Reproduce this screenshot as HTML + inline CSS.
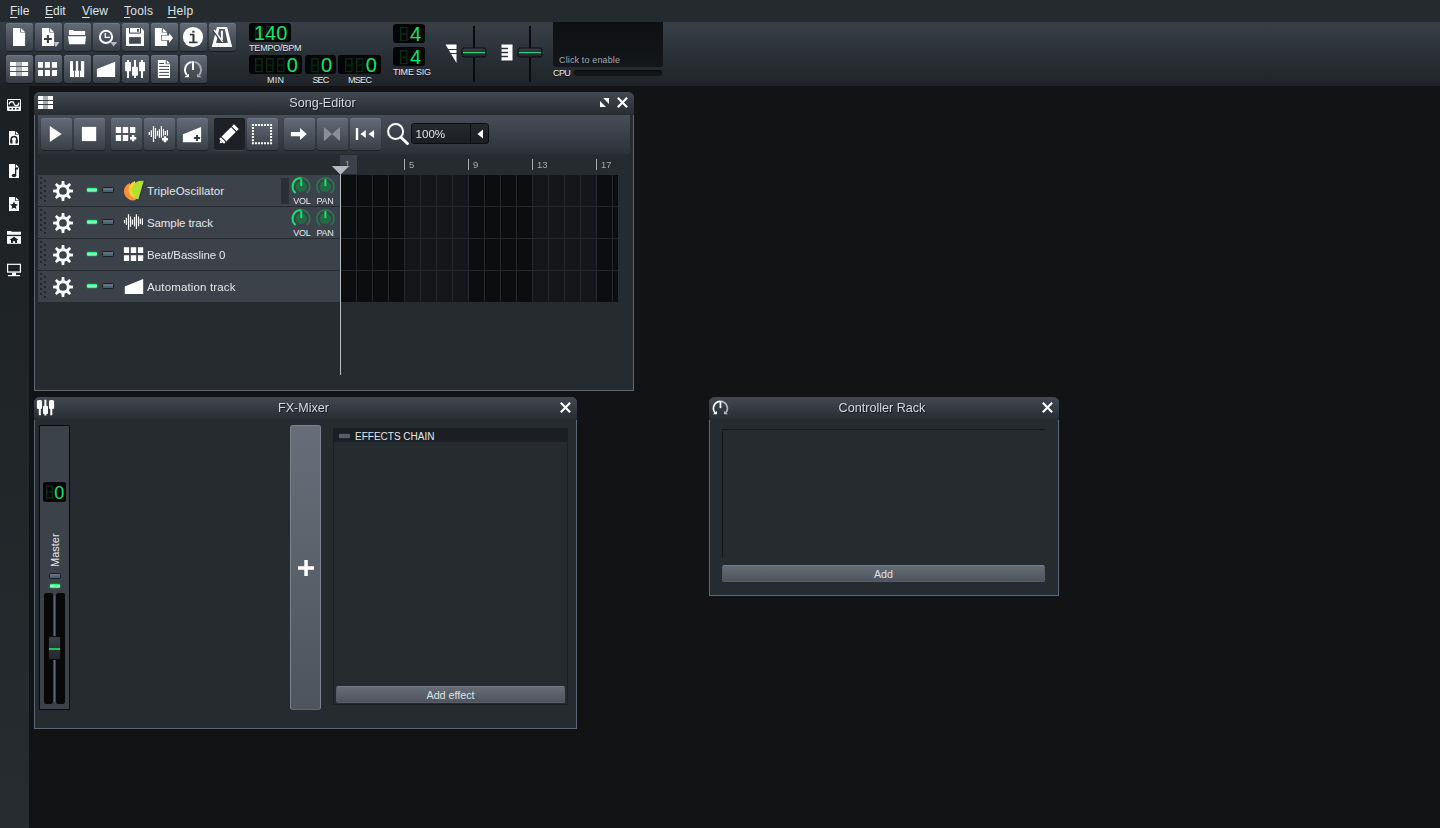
<!DOCTYPE html>
<html lang="en">
<head>
<meta charset="utf-8">
<title>LMMS</title>
<style>
*{box-sizing:border-box;margin:0;padding:0}
html,body{width:1440px;height:828px;overflow:hidden}
body{background:#111314;font-family:"Liberation Sans",sans-serif;font-size:12px;color:#e0e4e8;position:relative}
.abs{position:absolute}
#menubar{position:absolute;left:0;top:0;width:1440px;height:22px;background:#252a2e}
#menubar span{position:absolute;top:4px;font-size:12px;line-height:14px;color:#dfe3e8;white-space:nowrap}
#menubar span u{text-decoration:underline;text-decoration-thickness:1px;text-underline-offset:1.500px}
#toolbar{position:absolute;left:0;top:22px;width:1440px;height:64px;background:linear-gradient(#383f48,#1f2327)}
#sidebar{position:absolute;left:0;top:86px;width:29px;height:742px;background:linear-gradient(#1c2022,#272c30)}
.tb{position:absolute;width:27px;height:28px;border-radius:3px;background:linear-gradient(#626b78,#393e46);box-shadow:inset 0 1px 0 #6d7684,0 1px 1px rgba(0,0,0,.45)}
.tb svg{position:absolute;left:0;top:0}
.lcd{position:absolute;background:#040506;border-radius:3px}
.lbl{position:absolute;font-size:9px;line-height:10px;color:#e8ebee;white-space:nowrap;text-shadow:0 1px 0 #101214}
.win{position:absolute;background:#262b30;border:1px solid #5c6877;border-top:none;border-radius:6px 6px 0 0}
.title{position:absolute;left:-1px;right:-1px;top:0;height:23px;background:linear-gradient(#424952,#272c31);border-radius:6px 6px 0 0}
.title .tt{position:absolute;left:0;right:0;top:3px;text-align:center;font-size:12.600px;line-height:16px;color:#d6d9de;text-shadow:1px 1px 0 #15181b;white-space:nowrap;will-change:transform}
.sb{position:absolute;width:31px;height:32px;border-radius:3px;background:linear-gradient(#626b78,#3a3f47);box-shadow:inset 0 1px 0 #6d7684,0 1px 1px rgba(0,0,0,.4)}
.sb svg{position:absolute;left:0;top:0}
.sb.on{background:#1d2024;box-shadow:inset 0 1px 0 #191c1f,0 1px 0 #3d444c}
.row{position:absolute;left:3px;width:303px;height:31px;background:#3b424a}
.row .name{position:absolute;left:109px;top:9px;font-size:11.500px;line-height:14px;color:#e4e7ea;white-space:nowrap}
.ledg{position:absolute;width:10.500px;height:4.400px;border-radius:1px;background:linear-gradient(#3bf288 0,#3bf288 28%,#a0fcc8 42%,#a0fcc8 58%,#3bf288 72%);box-shadow:0 0 1.500px #2fe67f}
.ledo{position:absolute;width:11.800px;height:5.800px;border-radius:1.500px;background:linear-gradient(#68798c,#4a5866);border:1px solid #1c2024}
.btn{position:absolute;border-radius:2px;background:linear-gradient(#646c77,#4e555e);border:1px solid #565d67;border-top-color:#737b87;color:#dfe3e8;text-align:center;font-size:10.700px}
</style>
</head>
<body>
<div id="menubar">
<span style="left:10px"><u>F</u>ile</span>
<span style="left:45px"><u>E</u>dit</span>
<span style="left:82px"><u>V</u>iew</span>
<span style="left:124px;letter-spacing:.25px"><u>T</u>ools</span>
<span style="left:167.500px;letter-spacing:.3px"><u>H</u>elp</span>
</div>
<div id="toolbar"></div>
<div id="sidebar"></div>
<!--MAINTB_START-->
<!-- main toolbar row 1 -->
<div class="tb" style="left:6px;top:23px"><svg width="27" height="28"><path d="M7 5h7.200v4.400h4.900V23H7z" fill="#fff"/><path d="M15 5.200l3.900 3.900H15z" fill="#fff"/></svg></div>
<div class="tb" style="left:35px;top:23px"><svg width="27" height="28"><path d="M7 5h7.200v4.400h4.900V23H7z" fill="#fff"/><path d="M15 5.200l3.900 3.900H15z" fill="#fff"/><path d="M9 15h7.800v2H9zM11.900 12.100h2v7.800h-2z" fill="#353a42"/><path d="M19.100 19h5.400l-3.200 4.500h-1.200z" fill="#c3c7cd"/></svg></div>
<div class="tb" style="left:64px;top:23px"><svg width="27" height="28"><path d="M4.900 6.900h4.200l.5 1h11.500v4H4.900z" fill="#fff"/><path d="M4 13.200h18l-.9 8H5.100z" fill="#fff"/></svg></div>
<div class="tb" style="left:93px;top:23px"><svg width="27" height="28"><circle cx="13" cy="13.900" r="6.100" fill="none" stroke="#fff" stroke-width="2"/><path d="M12.300 9.900v4.400H17" fill="none" stroke="#fff" stroke-width="1.300"/><path d="M17.200 19h7.100l-3.700 4.400z" fill="#b5bac1"/></svg></div>
<div class="tb" style="left:122px;top:23px"><svg width="27" height="28"><path d="M4 5h15.300L22 7.700V23H4z" fill="#fff"/><path d="M7.500 5v5.100h11V5" fill="none" stroke="#3c424b" stroke-width="1"/><path d="M15.100 6.100h1.800v2.700h-1.800z" fill="#3c424b"/><path d="M7.100 14.100h11.800v6.700H7.100z" fill="#434a54"/></svg></div>
<div class="tb" style="left:151px;top:23px"><svg width="27" height="28"><path d="M3.900 5h6.900v4.400h5.300V23H3.900z" fill="#fff"/><path d="M11.900 5.200l3.900 3.900h-3.900z" fill="#fff"/><path d="M10.800 12.600h7.300v-2.500l4 4.900-4 4.900v-2.700h-7.300z" fill="#fff" stroke="#3f454e" stroke-width="1.200" paint-order="stroke"/></svg></div>
<div class="tb" style="left:180px;top:23px"><svg width="27" height="28" style="will-change:transform"><circle cx="13" cy="14" r="10.100" fill="#fff"/><text x="13" y="19.900" text-anchor="middle" font-family="Liberation Mono,monospace" font-size="17" fill="#33383f" stroke="#33383f" stroke-width=".35">i</text></svg></div>
<div class="tb" style="left:209px;top:23px"><svg width="27" height="28"><path d="M7.900 3.900h10.200l5.100 20.200H2.800z M10.100 6.100L7.200 19.900h11.600L15.900 6.100z" fill="#fff" fill-rule="evenodd"/><path d="M11.900 7.700h2V17h-2z" fill="#fff"/><path d="M4.600 7.400l8.500 11.800" stroke="#3f454e" stroke-width="2.600"/><path d="M5.200 7l8.500 11.800" stroke="#fff" stroke-width="1.400"/></svg></div>
<!-- main toolbar row 2 -->
<div class="tb" style="left:6px;top:55px"><svg width="27" height="28"><path d="M4 7h6.200v3.900H4zM15.900 7h6.200v3.900h-6.200zM4 12.100h6.200v3.800H4zM15.900 12.100h6.200v3.800h-6.200zM4 17.100h6.200V21H4zM15.900 17.100h6.200V21h-6.200z" fill="#fff"/><path d="M10.200 7h5.700v3.900h-5.700zM10.200 12.100h5.700v3.800h-5.700zM10.200 17.100h5.700V21h-5.700z" fill="#b3b7bc"/></svg></div>
<div class="tb" style="left:35px;top:55px"><svg width="27" height="28"><path d="M3 7h5v5.800H3zM9.900 7h5.100v5.800H9.900zM16.900 7h5.100v5.800h-5.100zM3 15h5v6H3zM9.900 15h5.100v6H9.900zM16.900 15h5.100v6h-5.100z" fill="#fff"/></svg></div>
<div class="tb" style="left:64px;top:55px"><svg width="27" height="28"><path d="M6 6.100h14.200v16H6z" fill="#fff"/><path d="M9.100 6.100h2.700v9.600H9.100zM14.200 6.100h2.700v9.600h-2.700z" fill="#454c56"/><path d="M10.100 15.700h.8v6.400h-.8zM15.200 15.700h.8v6.400h-.8z" fill="#40464f"/></svg></div>
<div class="tb" style="left:93px;top:55px"><svg width="27" height="28"><path d="M3.900 13.900L22.100 6.800v15.300H3.900z" fill="#fff"/></svg></div>
<div class="tb" style="left:122px;top:55px"><svg width="27" height="28"><path d="M5 5h2v18H5zM12 5h2v18h-2zM19 5h2v18h-2z" fill="#fff"/><rect x="3.100" y="7" width="5.900" height="9.300" rx=".8" fill="#fff"/><rect x="10" y="11.700" width="5.900" height="9" rx=".8" fill="#fff"/><rect x="17.100" y="7" width="5.900" height="9.300" rx=".8" fill="#fff"/></svg></div>
<div class="tb" style="left:151px;top:55px"><svg width="27" height="28"><path d="M6.900 5h7.800v4.300H19V23H6.900z" fill="#fff"/><path d="M15.700 5.200l3.300 3.300h-3.300z" fill="#fff"/><path d="M8.200 8.500H13M8.200 11.400H18M8.200 14.400H18M8.200 17.400H18M8.200 20.400H18" stroke="#434a54" stroke-width="1"/></svg></div>
<div class="tb" style="left:180px;top:55px"><svg width="27" height="28"><path d="M11.600 7.100A8 8 0 0 0 6.800 20" fill="none" stroke="#fff" stroke-width="2"/><path d="M14.400 7.100A8 8 0 0 1 19.200 20" fill="none" stroke="#a6abb3" stroke-width="2"/><path d="M12 6.300h2V15h-2z" fill="#fff"/><path d="M4.200 22.300H9v-3.600z" fill="#fff"/><path d="M17 18.700v3.600h4.800z" fill="#a6abb3"/></svg></div>
<!--MAINTB_END-->
<!--LCDS_START-->
<!-- LCDs -->
<div class="lcd" style="left:249px;top:23px;width:42px;height:19px"><svg width="42" height="19" style="position:absolute;left:0;top:0"><path d="M6 3.0h7.6v14.2h-7.6z M7.4 4.4v5.0h4.8v-5.0z M7.4 10.799999999999999v5.0h4.8v-5.0z" fill="#0a2917" fill-rule="evenodd"/><path d="M17 3.0h7.6v14.2h-7.6z M18.4 4.4v5.0h4.8v-5.0z M18.4 10.799999999999999v5.0h4.8v-5.0z" fill="#0a2917" fill-rule="evenodd"/><text x="38.3" y="17.2" text-anchor="end" font-family="Liberation Sans,sans-serif" font-size="20" fill="#12e56a">140</text></svg></div>
<div class="lcd" style="left:249px;top:55px;width:53px;height:19px"><svg width="53" height="19" style="position:absolute;left:0;top:0"><path d="M6 3.0h7.6v14.2h-7.6z M7.4 4.4v5.0h4.8v-5.0z M7.4 10.799999999999999v5.0h4.8v-5.0z" fill="#0a2917" fill-rule="evenodd"/><path d="M17 3.0h7.6v14.2h-7.6z M18.4 4.4v5.0h4.8v-5.0z M18.4 10.799999999999999v5.0h4.8v-5.0z" fill="#0a2917" fill-rule="evenodd"/><path d="M28 3.0h7.6v14.2h-7.6z M29.4 4.4v5.0h4.8v-5.0z M29.4 10.799999999999999v5.0h4.8v-5.0z" fill="#0a2917" fill-rule="evenodd"/><text x="48.8" y="17.2" text-anchor="end" font-family="Liberation Sans,sans-serif" font-size="20" fill="#12e56a">0</text></svg></div>
<div class="lcd" style="left:305px;top:55px;width:31px;height:19px"><svg width="31" height="19" style="position:absolute;left:0;top:0"><path d="M6.3 3.0h7.6v14.2h-7.6z M7.699999999999999 4.4v5.0h4.8v-5.0z M7.699999999999999 10.799999999999999v5.0h4.8v-5.0z" fill="#0a2917" fill-rule="evenodd"/><text x="27" y="17.2" text-anchor="end" font-family="Liberation Sans,sans-serif" font-size="20" fill="#12e56a">0</text></svg></div>
<div class="lcd" style="left:338px;top:55px;width:43px;height:19px"><svg width="43" height="19" style="position:absolute;left:0;top:0"><path d="M7 3.0h7.6v14.2h-7.6z M8.4 4.4v5.0h4.8v-5.0z M8.4 10.799999999999999v5.0h4.8v-5.0z" fill="#0a2917" fill-rule="evenodd"/><path d="M18 3.0h7.6v14.2h-7.6z M19.4 4.4v5.0h4.8v-5.0z M19.4 10.799999999999999v5.0h4.8v-5.0z" fill="#0a2917" fill-rule="evenodd"/><text x="38.8" y="17.2" text-anchor="end" font-family="Liberation Sans,sans-serif" font-size="20" fill="#12e56a">0</text></svg></div>
<div class="lcd" style="left:393px;top:24px;width:32px;height:19px"><svg width="32" height="19" style="position:absolute;left:0;top:0"><path d="M7 2.9h7.6v14.2h-7.6z M8.4 4.3v5.0h4.8v-5.0z M8.4 10.7v5.0h4.8v-5.0z" fill="#0a2917" fill-rule="evenodd"/><text x="28" y="17.1" text-anchor="end" font-family="Liberation Sans,sans-serif" font-size="20" fill="#12e56a">4</text></svg></div>
<div class="lcd" style="left:393px;top:47px;width:32px;height:19px"><svg width="32" height="19" style="position:absolute;left:0;top:0"><path d="M7 3.0h7.6v14.2h-7.6z M8.4 4.4v5.0h4.8v-5.0z M8.4 10.799999999999999v5.0h4.8v-5.0z" fill="#0a2917" fill-rule="evenodd"/><text x="28" y="17.2" text-anchor="end" font-family="Liberation Sans,sans-serif" font-size="20" fill="#12e56a">4</text></svg></div>
<div class="lbl" style="left:249px;top:43px;letter-spacing:-.18px">TEMPO/BPM</div>
<div class="lbl" style="left:267px;top:75px;letter-spacing:.3px">MIN</div>
<div class="lbl" style="left:312.500px;top:75px;letter-spacing:-.9px">SEC</div>
<div class="lbl" style="left:348px;top:75px;letter-spacing:-.7px">MSEC</div>
<div class="lbl" style="left:393px;top:67px;letter-spacing:-.2px">TIME SIG</div>
<!-- master volume slider -->
<svg class="abs" style="left:440px;top:22px" width="120" height="64"><defs><linearGradient id="hg" x1="0" y1="0" x2="0" y2="1"><stop offset="0" stop-color="#3a3f46"/><stop offset="1" stop-color="#22262a"/></linearGradient></defs>
<path d="M5.500 22.500h11v18.500z" fill="#fff"/><path d="M5 27.500h12M5 31.500h12" stroke="#2e343b" stroke-width="1.200"/>
<rect x="33" y="4" width="2" height="56" fill="#0a0b0c"/>
<rect x="22" y="26" width="24" height="9" rx="2" fill="url(#hg)" stroke="#0c0d0f" stroke-width="1"/>
<rect x="23" y="30" width="22" height="1.200" fill="#2fd07a"/>
<path d="M61.500 22.500h11v16h-11z" fill="#fff"/><path d="M61 26.500h7M61 30.500h7M61 34.500h7" stroke="#2e343b" stroke-width="1.600"/>
<rect x="89" y="4" width="2" height="56" fill="#0a0b0c"/>
<rect x="78" y="26" width="24" height="9" rx="2" fill="url(#hg)" stroke="#0c0d0f" stroke-width="1"/>
<rect x="79" y="30" width="22" height="1.200" fill="#2fd07a"/>
</svg>
<!-- oscilloscope / cpu -->
<div class="abs" style="left:553px;top:22px;width:110px;height:45px;background:linear-gradient(#0e1012,#13161a);border-radius:0 0 3px 3px"></div>
<div class="abs" style="left:559px;top:55px;font-size:9px;line-height:10px;color:#a4a9b0;white-space:nowrap;letter-spacing:.14px">Click to enable</div>
<div class="lbl" style="left:553px;top:68px;letter-spacing:-.6px">CPU</div>
<div class="abs" style="left:574px;top:70px;width:88px;height:6px;border-radius:3px;background:#131517;box-shadow:inset 0 1px 1px #090a0b"></div>
<!--LCDS_END-->
<!--SIDE_START-->
<svg class="abs" style="left:0;top:86px" width="29" height="210">
<!-- instruments -->
<rect x="7" y="13" width="14" height="12" rx="1" fill="#fff"/><rect x="8" y="14" width="12" height="6.500" fill="#1d2123"/><path d="M9.300 18.400C9.300 15 13.600 15 14 17.600S18.600 20.800 18.800 16.600" fill="none" stroke="#fff" stroke-width="1.300"/><path d="M9.500 22h2v1.500h-2zM13 22h2v1.500h-2zM16.500 22h2v1.500h-2z" fill="#1d2123"/>
<!-- projects -->
<path d="M9 45h6v3.800h4V59H9z" fill="#fff"/><path d="M15.800 45.2l3.100 3.100h-3.100z" fill="#fff"/><path d="M11.100 56v-2.600a2.900 2.900 0 0 1 5.800 0V56" fill="none" stroke="#1d2123" stroke-width="1.500"/><path d="M10.300 54.300h2.200v3.200h-2.200zM15.500 54.300h2.200v3.200h-2.200z" fill="#1d2123"/>
<!-- samples -->
<path d="M9 78h6v3.800h4V92H9z" fill="#fff"/><path d="M15.800 78.2l3.100 3.100h-3.100z" fill="#fff"/><path d="M15 82h1.300v7.500H15z" fill="#1d2123"/><ellipse cx="14" cy="89.500" rx="2.200" ry="1.700" fill="#1d2123"/><path d="M15 82h3v1.500h-3z" fill="#1d2123"/>
<!-- presets -->
<path d="M9 111h6v3.800h4V125H9z" fill="#fff"/><path d="M15.800 111.2l3.100 3.100h-3.100z" fill="#fff"/><path d="M14 115.500l1.200 2.600 2.800.3-2.100 1.900.6 2.800-2.500-1.400-2.500 1.400.6-2.800-2.100-1.900 2.800-.3z" fill="#1d2123"/>
<!-- home -->
<path d="M7 145h4l.8.800H21v3H7z" fill="#fff"/><path d="M7 150.100h14v7.700H7z" fill="#fff"/><path d="M14 150.700l4.600 3.300h-1.600v3h-1.900v-1.800h-2.200v1.800H11v-3H9.400z" fill="#1d2123"/>
<!-- computer -->
<path d="M7 177.700h14v9H7z" fill="#fff"/><path d="M8.200 178.900h11.600v6.500H8.200z" fill="#1d2123"/><path d="M12 186.700h4v2.300h-4z" fill="#fff"/><path d="M8 189h12v1.200H8z" fill="#fff"/>
</svg>
<!--SIDE_END-->
<!--SONG_START-->
<div class="win" style="left:34px;top:92px;width:600px;height:299px">
<div class="title"><svg class="abs" style="left:3px;top:4px" width="18" height="15"><path d="M1 0h5v3.900H1zM11 0h5v3.900h-5zM1 4.900h5V8H1zM11 4.900h5V8h-5zM1 9h5v3.900H1zM11 9h5v3.900h-5z" fill="#fff"/><path d="M6 0h5v3.900H6zM6 4.900h5V8H6zM6 9h5v3.900H6z" fill="#a9adb3"/></svg><div class="tt" style="left:-23px">Song-Editor</div><svg class="abs" style="left:565px;top:4px" width="32" height="14"><path d="M4.200 2H10v6zM1 5v6h6z" fill="#fff"/><path d="M18.800 1.800l9.300 9.400M28.100 1.800l-9.300 9.400" stroke="#fff" stroke-width="2.100"/></svg></div>
<div class="abs" style="left:3px;top:23px;width:592px;height:39px;background:linear-gradient(#474e59,#2d3238)"></div>
<div class="sb" style="left:6px;top:26px"><svg width="31" height="32"><path d="M8.800 8L20.700 15.900 8.800 24z" fill="#fff"/></svg></div>
<div class="sb" style="left:39px;top:26px"><svg width="31" height="32"><path d="M7.900 8.900h14.300v14.200H7.900z" fill="#fff"/></svg></div>
<div class="sb" style="left:76px;top:26px"><svg width="31" height="32"><path d="M4.800 9h5.300v5.900H4.800zM11.800 9h5.400v5.900h-5.400zM19 9h5.300v5.900H19zM4.800 16.900h5.300v6.200H4.800zM11.800 16.900h5.400v6.200h-5.400z" fill="#fff"/><path d="M19 19h6.200v2.400H19zM20.900 17.100h2.400v6.200h-2.400z" fill="#fff"/></svg></div>
<div class="sb" style="left:109px;top:26px"><svg width="31" height="32"><path d="M5.3 14.1V16.9M7.3 12.2V19.1M9.5 7.9V24M11.5 10.1V20.9M13.5 13V17.7M15.4 11.2V19.8M17.4 7.9V19.8M19.5 10.8V17.7M21.4 13V16.9M23.4 11.9V17.7" stroke="#fff" stroke-width="1.200" fill="none"/><path d="M18 20.100h6v2.400h-6zM19.800 18.300h2.400v6h-2.400z" fill="#fff" stroke="#454c56" stroke-width="1" paint-order="stroke"/></svg></div>
<div class="sb" style="left:142px;top:26px"><svg width="31" height="32"><path d="M5.900 16.200L24.100 8.900v15.300H5.900z" fill="#fff"/><path d="M16.900 19h6.200v2h-6.200zM19 16.900h2v6.200h-2z" fill="#343940"/></svg></div>
<div class="sb on" style="left:179px;top:26px"><svg width="31" height="32"><g transform="translate(15 16) rotate(-45)"><path d="M-10.500 -3.400h21v6.800h-21z" fill="#fff"/><path d="M-10.500 -1.700v3.400l-2.600-1.700z" fill="#fff"/><path d="M-7.600 -3.600v7.200M6.800 -3.600v7.200" stroke="#1d2024" stroke-width="1.100"/></g></svg></div>
<div class="sb" style="left:212px;top:26px"><svg width="31" height="32"><path d="M4.90 6h2v2h-2zM4.90 24.2h2v2h-2zM7.93 6h2v2h-2zM7.93 24.2h2v2h-2zM10.96 6h2v2h-2zM10.96 24.2h2v2h-2zM13.99 6h2v2h-2zM13.99 24.2h2v2h-2zM17.02 6h2v2h-2zM17.02 24.2h2v2h-2zM20.05 6h2v2h-2zM20.05 24.2h2v2h-2zM23.08 6h2v2h-2zM23.08 24.2h2v2h-2zM4.9 9.03h2v2h-2zM23.08 9.03h2v2h-2zM4.9 12.06h2v2h-2zM23.08 12.06h2v2h-2zM4.9 15.09h2v2h-2zM23.08 15.09h2v2h-2zM4.9 18.12h2v2h-2zM23.08 18.12h2v2h-2zM4.9 21.15h2v2h-2zM23.08 21.15h2v2h-2z" fill="#fff"/></svg></div>
<div class="sb" style="left:249px;top:26px"><svg width="31" height="32"><path d="M6.900 14h9.100v-3.900l6.750 6-6.750 5.900v-3.800H6.900z" fill="#fff"/></svg></div>
<div class="sb" style="left:282px;top:26px"><svg width="31" height="32"><path d="M6.900 8.900L15 16.100 6.900 23.300zM23 8.900L15 16.100l8 7.200z" fill="#8b9098"/></svg></div>
<div class="sb" style="left:315px;top:26px"><svg width="31" height="32"><path d="M5.800 10.100h2.400V22H5.800zM15.800 12v8l-5.400-4zM24.100 12v8l-5.600-4z" fill="#fff"/></svg></div>
<svg class="abs" style="left:351px;top:30px" width="25" height="25"><circle cx="9.600" cy="9.500" r="7.500" fill="none" stroke="#fff" stroke-width="2"/><path d="M15.200 15.500l6.200 6" stroke="#fff" stroke-width="3" stroke-linecap="round"/></svg>
<div class="abs" style="left:376px;top:31px;width:78px;height:21px;border-radius:3px;background:linear-gradient(#25292e,#1b1e22);border:1px solid #0d0e10"><div class="abs" style="left:58px;top:0;width:1px;height:19px;background:#0d0e10"></div><div class="abs" style="left:3.500px;top:2px;font-size:11.600px;line-height:15px;color:#e0e4e8">100%</div><svg class="abs" style="left:64px;top:5px" width="8" height="10"><path d="M7 0.500v9L1.500 5z" fill="#fff"/></svg></div>
<div class="abs" style="left:305px;top:63px;width:17px;height:19px;background:#3a414a"></div>
<div class="abs" style="left:310px;top:67px;font-size:9px;line-height:10px;color:#9aa3ad">1</div>
<div class="abs" style="left:369px;top:67px;width:1px;height:11px;background:#a7adb4"></div><div class="abs" style="left:374px;top:67.5px;font-size:9.500px;line-height:10px;color:#a2a9b1">5</div>
<div class="abs" style="left:433px;top:67px;width:1px;height:11px;background:#a7adb4"></div><div class="abs" style="left:438px;top:67.5px;font-size:9.500px;line-height:10px;color:#a2a9b1">9</div>
<div class="abs" style="left:497px;top:67px;width:1px;height:11px;background:#a7adb4"></div><div class="abs" style="left:502px;top:67.5px;font-size:9.500px;line-height:10px;color:#a2a9b1">13</div>
<div class="abs" style="left:561px;top:67px;width:1px;height:11px;background:#a7adb4"></div><div class="abs" style="left:566px;top:67.5px;font-size:9.500px;line-height:10px;color:#a2a9b1">17</div>
<div class="abs" style="left:306px;top:83px;width:277px;height:127px;background:linear-gradient(#24282d,#24282d) 0 31px/100% 1px no-repeat,linear-gradient(#24282d,#24282d) 0 63px/100% 1px no-repeat,linear-gradient(#24282d,#24282d) 0 95px/100% 1px no-repeat,repeating-linear-gradient(90deg,transparent 0,transparent 15px,#24282d 15px,#24282d 16px),repeating-linear-gradient(90deg,#0c0d0f 0,#0c0d0f 63px,#14161a 63px,#14161a 127px,#0c0d0f 127px,#0c0d0f 128px)"></div>
<div class="row" style="top:83px"><svg class="abs" style="left:0;top:0" width="10" height="31"><path d="M2 2h2v2H2zM2 7h2v2H2zM2 12h2v2H2zM2 17h2v2H2zM2 22h2v2H2zM6 5h2v2H6zM6 10h2v2H6zM6 15h2v2H6zM6 20h2v2H6zM6 25h2v2H6z" fill="#24282d"/></svg><svg class="abs" style="left:15px;top:6px" width="20" height="20" viewBox="-10 -10 20 20"><g fill="#fff"><path d="M-1.200 -10.200h2.400l.5 4.500h-3.400z" transform="rotate(0)"/><path d="M-1.200 -10.200h2.400l.5 4.500h-3.400z" transform="rotate(45)"/><path d="M-1.200 -10.200h2.400l.5 4.500h-3.400z" transform="rotate(90)"/><path d="M-1.200 -10.200h2.400l.5 4.500h-3.400z" transform="rotate(135)"/><path d="M-1.200 -10.200h2.400l.5 4.500h-3.400z" transform="rotate(180)"/><path d="M-1.200 -10.200h2.400l.5 4.500h-3.400z" transform="rotate(225)"/><path d="M-1.200 -10.200h2.400l.5 4.500h-3.400z" transform="rotate(270)"/><path d="M-1.200 -10.200h2.400l.5 4.500h-3.400z" transform="rotate(315)"/></g><circle r="5.350" fill="none" stroke="#fff" stroke-width="3"/></svg><div class="ledg" style="left:48.800px;top:12.700px"></div><div class="ledo" style="left:64.100px;top:12px"></div><svg class="abs" style="left:85px;top:5px" width="23" height="21"><path d="M6.600 2.900A9.170 9.170 0 0 0 12.900 20.100z" fill="#ff8f3a"/><path d="M12 1A9.170 9.170 0 0 0 14.400 18.900z" fill="#ffd43b"/><path d="M21.200 1.600L15.800 20" stroke="#2b3036" stroke-width="1.200"/><path d="M20.700 1A9.700 9.700 0 0 0 15.300 19.600z" fill="#b2e02e"/></svg><div class="name" style="letter-spacing:0.05px">TripleOscillator</div><div class="abs" style="left:243px;top:3px;width:8px;height:26px;background:#2b3036"></div><svg class="abs" style="left:250px;top:0" width="52" height="31"><path d="M7.67 18.09A8.6 8.6 0 1 1 18.73 18.09" fill="none" stroke="#2b7650" stroke-width="1.800"/><path d="M7.67 18.09A8.6 8.6 0 0 1 13.2 2.9" fill="none" stroke="#17e06c" stroke-width="2"/><circle cx="13.2" cy="11.5" r="5.600" fill="#226b45"/><rect x="12.2" y="4.0" width="2" height="7" fill="#17e06c"/><path d="M31.87 18.09A8.6 8.6 0 1 1 42.93 18.09" fill="none" stroke="#2b7650" stroke-width="1.800"/><circle cx="37.4" cy="11.5" r="5.600" fill="#226b45"/><rect x="36.4" y="4.0" width="2" height="7" fill="#17e06c"/></svg><div class="lbl" style="left:255.300px;top:21px;text-shadow:none;letter-spacing:-.3px">VOL</div><div class="lbl" style="left:278.500px;top:21px;text-shadow:none;letter-spacing:-.25px">PAN</div></div>
<div class="row" style="top:115px"><svg class="abs" style="left:0;top:0" width="10" height="31"><path d="M2 2h2v2H2zM2 7h2v2H2zM2 12h2v2H2zM2 17h2v2H2zM2 22h2v2H2zM6 5h2v2H6zM6 10h2v2H6zM6 15h2v2H6zM6 20h2v2H6zM6 25h2v2H6z" fill="#24282d"/></svg><svg class="abs" style="left:15px;top:6px" width="20" height="20" viewBox="-10 -10 20 20"><g fill="#fff"><path d="M-1.200 -10.200h2.400l.5 4.500h-3.400z" transform="rotate(0)"/><path d="M-1.200 -10.200h2.400l.5 4.500h-3.400z" transform="rotate(45)"/><path d="M-1.200 -10.200h2.400l.5 4.500h-3.400z" transform="rotate(90)"/><path d="M-1.200 -10.200h2.400l.5 4.500h-3.400z" transform="rotate(135)"/><path d="M-1.200 -10.200h2.400l.5 4.500h-3.400z" transform="rotate(180)"/><path d="M-1.200 -10.200h2.400l.5 4.500h-3.400z" transform="rotate(225)"/><path d="M-1.200 -10.200h2.400l.5 4.500h-3.400z" transform="rotate(270)"/><path d="M-1.200 -10.200h2.400l.5 4.500h-3.400z" transform="rotate(315)"/></g><circle r="5.350" fill="none" stroke="#fff" stroke-width="3"/></svg><div class="ledg" style="left:48.800px;top:12.700px"></div><div class="ledo" style="left:64.100px;top:12px"></div><svg class="abs" style="left:85px;top:5px" width="23" height="21"><path d="M1.5 7.9V11.3M3.4 5.7V13M5.5 2.25V17.8M7.5 4.5V14.75M9.4 7.4V12.5M11.5 5.1V14.2M13.4 2.25V17M15.5 4.5V14.2M17.4 6.8V11.9M19.4 6.2V13" stroke="#fff" stroke-width="1.200" fill="none"/></svg><div class="name" style="letter-spacing:-0.1px">Sample track</div><svg class="abs" style="left:250px;top:0" width="52" height="31"><path d="M7.67 18.09A8.6 8.6 0 1 1 18.73 18.09" fill="none" stroke="#2b7650" stroke-width="1.800"/><path d="M7.67 18.09A8.6 8.6 0 0 1 13.2 2.9" fill="none" stroke="#17e06c" stroke-width="2"/><circle cx="13.2" cy="11.5" r="5.600" fill="#226b45"/><rect x="12.2" y="4.0" width="2" height="7" fill="#17e06c"/><path d="M31.87 18.09A8.6 8.6 0 1 1 42.93 18.09" fill="none" stroke="#2b7650" stroke-width="1.800"/><circle cx="37.4" cy="11.5" r="5.600" fill="#226b45"/><rect x="36.4" y="4.0" width="2" height="7" fill="#17e06c"/></svg><div class="lbl" style="left:255.300px;top:21px;text-shadow:none;letter-spacing:-.3px">VOL</div><div class="lbl" style="left:278.500px;top:21px;text-shadow:none;letter-spacing:-.25px">PAN</div></div>
<div class="row" style="top:147px"><svg class="abs" style="left:0;top:0" width="10" height="31"><path d="M2 2h2v2H2zM2 7h2v2H2zM2 12h2v2H2zM2 17h2v2H2zM2 22h2v2H2zM6 5h2v2H6zM6 10h2v2H6zM6 15h2v2H6zM6 20h2v2H6zM6 25h2v2H6z" fill="#24282d"/></svg><svg class="abs" style="left:15px;top:6px" width="20" height="20" viewBox="-10 -10 20 20"><g fill="#fff"><path d="M-1.200 -10.200h2.400l.5 4.500h-3.400z" transform="rotate(0)"/><path d="M-1.200 -10.200h2.400l.5 4.500h-3.400z" transform="rotate(45)"/><path d="M-1.200 -10.200h2.400l.5 4.500h-3.400z" transform="rotate(90)"/><path d="M-1.200 -10.200h2.400l.5 4.500h-3.400z" transform="rotate(135)"/><path d="M-1.200 -10.200h2.400l.5 4.500h-3.400z" transform="rotate(180)"/><path d="M-1.200 -10.200h2.400l.5 4.500h-3.400z" transform="rotate(225)"/><path d="M-1.200 -10.200h2.400l.5 4.500h-3.400z" transform="rotate(270)"/><path d="M-1.200 -10.200h2.400l.5 4.500h-3.400z" transform="rotate(315)"/></g><circle r="5.350" fill="none" stroke="#fff" stroke-width="3"/></svg><div class="ledg" style="left:48.800px;top:12.700px"></div><div class="ledo" style="left:64.100px;top:12px"></div><svg class="abs" style="left:85px;top:5px" width="23" height="21"><path d="M0.900 3.200h5.200v5.700H0.900zM7.800 3.200h5.400v5.700H7.800zM14.900 3.200h5.300v5.700h-5.300zM0.900 11.200h5.200v5.900H0.900zM7.800 11.200h5.400v5.900H7.800zM14.900 11.200h5.300v5.900h-5.300z" fill="#fff"/></svg><div class="name" style="letter-spacing:-0.1px">Beat/Bassline 0</div></div>
<div class="row" style="top:179px"><svg class="abs" style="left:0;top:0" width="10" height="31"><path d="M2 2h2v2H2zM2 7h2v2H2zM2 12h2v2H2zM2 17h2v2H2zM2 22h2v2H2zM6 5h2v2H6zM6 10h2v2H6zM6 15h2v2H6zM6 20h2v2H6zM6 25h2v2H6z" fill="#24282d"/></svg><svg class="abs" style="left:15px;top:6px" width="20" height="20" viewBox="-10 -10 20 20"><g fill="#fff"><path d="M-1.200 -10.200h2.400l.5 4.500h-3.400z" transform="rotate(0)"/><path d="M-1.200 -10.200h2.400l.5 4.500h-3.400z" transform="rotate(45)"/><path d="M-1.200 -10.200h2.400l.5 4.500h-3.400z" transform="rotate(90)"/><path d="M-1.200 -10.200h2.400l.5 4.500h-3.400z" transform="rotate(135)"/><path d="M-1.200 -10.200h2.400l.5 4.500h-3.400z" transform="rotate(180)"/><path d="M-1.200 -10.200h2.400l.5 4.500h-3.400z" transform="rotate(225)"/><path d="M-1.200 -10.200h2.400l.5 4.500h-3.400z" transform="rotate(270)"/><path d="M-1.200 -10.200h2.400l.5 4.500h-3.400z" transform="rotate(315)"/></g><circle r="5.350" fill="none" stroke="#fff" stroke-width="3"/></svg><div class="ledg" style="left:48.800px;top:12.700px"></div><div class="ledo" style="left:64.100px;top:12px"></div><svg class="abs" style="left:85px;top:5px" width="23" height="21"><path d="M1.800 10.400L20.200 3v15H1.800z" fill="#fff"/></svg><div class="name" style="letter-spacing:0.14px">Automation track</div></div>
<div class="abs" style="left:305px;top:82px;width:1.300px;height:201px;background:#babdc0"></div>
<svg class="abs" style="left:296px;top:73px" width="20" height="11"><path d="M0.700 0.900h17.600l-8.800 8.800z" fill="#b6b9bc" stroke="#15181a" stroke-opacity=".55" stroke-width=".8" paint-order="stroke"/></svg>
</div>
<!--SONG_END-->
<!--FX_START-->
<div class="win" style="left:34px;top:397px;width:543px;height:332px">
<div class="title"><svg class="abs" style="left:2px;top:2px" width="20" height="18"><path d="M2.800 1h2v15.300h-2zM8.400 0.800h2v15.700h-2zM14.300 1h2v15.300h-2z" fill="#fff"/><rect x="0.900" y="1.300" width="5.100" height="8.700" rx="1.200" fill="#fff"/><rect x="7" y="6.800" width="5" height="8.300" rx="1.200" fill="#fff"/><rect x="13" y="1.300" width="5.100" height="8.700" rx="1.200" fill="#fff"/></svg><div class="tt" style="left:-4px">FX-Mixer</div><svg class="abs" style="left:525px;top:4px" width="14" height="14"><path d="M1.800 1.800l9.300 9.400M11.100 1.800l-9.300 9.400" stroke="#fff" stroke-width="2.100"/></svg></div>
<div class="abs" style="left:4px;top:28px;width:31px;height:285px;background:#3b424a;border:1px solid #0a0b0c"><div class="lcd" style="left:3px;top:56px;width:23px;height:20px;border-radius:2px"><svg width="23" height="20" class="abs" style="left:0;top:0"><path d="M3 3.500h7v13H3z M4.300 4.800v4.500h4.400v-4.500z M4.300 10.600v4.600h4.400v-4.600z" fill="#0b2f19" fill-rule="evenodd"/><text x="21.300" y="16.600" text-anchor="end" font-family="Liberation Sans,sans-serif" font-size="18" fill="#12e56a">0</text></svg></div><div class="abs" style="left:8px;top:141px;transform-origin:0 0;transform:rotate(-90deg);font-size:11px;line-height:14px;color:#e4e7ea;white-space:nowrap">Master</div><div class="ledo" style="left:8.700px;top:147.300px;width:12.300px;height:5.600px"></div><div class="ledg" style="left:9.500px;top:157.700px;width:10.500px;height:4.400px"></div><div class="abs" style="left:4px;top:167px;width:9px;height:111px;background:#070809;border-radius:2px"></div><div class="abs" style="left:16px;top:167px;width:9px;height:111px;background:#070809;border-radius:2px"></div><div class="abs" style="left:14px;top:170px;width:1px;height:106px;background:#5d656f"></div><div class="abs" style="left:8px;top:210px;width:13px;height:24px;border-radius:2px;background:linear-gradient(#3c4148,#24282c);border:1px solid #0c0d0f"><div class="abs" style="left:0;top:10.500px;width:11px;height:2px;background:#18c964"></div></div></div>
<div class="abs" style="left:255px;top:28px;width:31px;height:285px;border-radius:3px;background:linear-gradient(#666e79,#4d545d);border:1px solid #7a838f;border-bottom-color:#5e6670"><svg class="abs" style="left:6px;top:133px" width="18" height="18"><path d="M1 7.300h16v3.500H1zM7.300 1h3.500v16H7.300z" fill="#fff"/></svg></div>
<div class="abs" style="left:298px;top:31px;width:235px;height:277px;border:1px solid #1c1f23;background:#262b30"><div class="abs" style="left:0;top:0;width:233px;height:13px;background:#1b1e22"></div><div class="abs" style="left:5px;top:5px;width:11px;height:4px;background:#51606f;border-radius:1px;box-shadow:0 0 0 .5px #2a3038"></div><div class="abs" style="left:21px;top:2px;font-size:10px;line-height:12px;color:#e4e7ea;white-space:nowrap">EFFECTS CHAIN</div><div class="btn" style="left:2px;top:257px;width:229px;height:17px;line-height:16.500px">Add effect</div></div>
</div>
<div class="win" style="left:709px;top:397px;width:350px;height:199px">
<div class="title"><svg class="abs" style="left:2px;top:2px" width="20" height="18"><path d="M9.400 2.400A7 7 0 0 0 4 13.800" fill="none" stroke="#fff" stroke-width="1.700"/><path d="M9.400 2.400A7 7 0 0 1 14.800 13.800" fill="none" stroke="#b4b9c0" stroke-width="1.700"/><path d="M8.600 2.200h1.700v7H8.600z" fill="#fff"/><path d="M1.900 15.300H6V12z" fill="#fff"/><path d="M13 12v3.300h4z" fill="#b4b9c0"/></svg><div class="tt" style="left:-4px">Controller Rack</div><svg class="abs" style="left:332px;top:4px" width="14" height="14"><path d="M1.800 1.800l9.300 9.400M11.100 1.800l-9.300 9.400" stroke="#fff" stroke-width="2.100"/></svg></div>
<div class="abs" style="left:12px;top:32px;width:323px;height:128px;border-top:1px solid #15181b;border-left:1px solid #15181b"></div>
<div class="btn" style="left:12px;top:168px;width:323px;height:17px;line-height:16.500px">Add</div>
</div>
<!--FX_END-->

</body>
</html>
